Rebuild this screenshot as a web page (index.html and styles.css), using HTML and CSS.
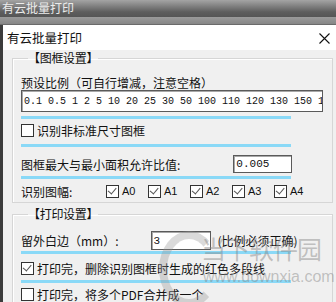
FILE: index.html
```html
<!DOCTYPE html>
<html lang="zh-CN">
<head>
<meta charset="UTF-8">
<title>有云批量打印</title>
<link rel="stylesheet" href="styles.css">
</head>
<body>
<div class="topbar">有云批量打印</div>
<div class="strip"></div>
<div class="window">
    <div class="win-title">
        <span>有云批量打印</span>
        <svg class="close" width="11" height="11" viewBox="0 0 11 11"><path d="M0.5 0.5L10.5 10.5M10.5 0.5L0.5 10.5" stroke="#111" stroke-width="1.1"/></svg>
    </div>
    <div class="body">
        <fieldset class="group g1">
            <legend>【图框设置】</legend>
            <div class="label first">预设比例（可自行增减，注意空格）</div>
            <div class="field wide">0.1 0.5 1 2 5 10 20 25 30 50 100 110 120 130 150 1</div>
            <div class="rule r1"></div>
            <div class="check-row c1"><span class="box"></span>识别非标准尺寸图框</div>
            <div class="rule r2"></div>
            <div class="row area">
                <span class="label-w">图框最大与最小面积允许比值:</span>
                <div class="field small">0.005</div>
            </div>
            <div class="rule r3"></div>
            <div class="row sizes">
                <span class="label-s">识别图幅:</span>
                <span class="size"><span class="box on"></span>A0</span>
                <span class="size"><span class="box on"></span>A1</span>
                <span class="size"><span class="box on"></span>A2</span>
                <span class="size"><span class="box on"></span>A3</span>
                <span class="size"><span class="box on"></span>A4</span>
            </div>
        </fieldset>
        <fieldset class="group g2">
            <legend>【打印设置】</legend>
            <div class="row margin">
                <span class="label-m">留外白边（mm）:</span>
                <div class="field tiny">3</div>
                <span class="note">(比例必须正确)</span>
            </div>
            <div class="rule r4"></div>
            <div class="check-row c2"><span class="box on"></span>打印完，删除识别图框时生成的红色多段线</div>
            <div class="rule r5"></div>
            <div class="check-row c3"><span class="box"></span>打印完，将多个PDF合并成一个</div>
        </fieldset>
        <div class="watermark">
            <span class="wm-logo"></span>
            <span class="wm-name">当下软件园</span>
            <span class="wm-url">www.downxia.com</span>
        </div>
    </div>
</div>
</body>
</html>
```

FILE: styles.css
```css
body {
    margin: 0;
    width: 336px;
    height: 302px;
    overflow: hidden;
    background-color: #3c3c3c;
    font-family: "Noto Sans CJK SC", "Liberation Sans", sans-serif;
    font-size: 12px;
    color: #111;
}
.topbar {
    height: 17px;
    line-height: 16px;
    padding-left: 2px;
    color: #ececec;
    background: linear-gradient(#a4a4a4, #5e5e5e 70%, #555);
}
.strip {
    height: 7px;
    background: linear-gradient(#9a9a9a, #868686);
    border-bottom: 1px solid #6a6a6a;
}
.window {
    margin-left: 3px;
    height: 277px;
    background-color: #f0f0f0;
    position: relative;
    overflow: hidden;
}
.win-title {
    height: 25px;
    background-color: #fff;
    display: flex;
    align-items: center;
    justify-content: space-between;
    padding: 0 6px 0 4px;
    font-size: 12.5px;
}
.close {
    margin-top: 1px;
}
.body {
    padding: 0 3px 0 9px;
}
.group {
    margin: 0;
    padding: 0 8px 3px 8px;
    border: 1px solid #d6d6d6;
    box-shadow: inset 1px 1px 0 #fff;
    min-width: 0;
}
.group legend {
    padding: 0;
    margin-left: 7px;
    line-height: 16px;
    letter-spacing: -0.3px;
}
.g2 {
    margin-top: 3px;
    border-bottom: none;
}
.label {
    line-height: 14px;
}
.first {
    padding-top: 10px;
}
.field {
    box-sizing: border-box;
    background-color: #fff;
    border: 1px solid #5a5a5a;
    box-shadow: inset 1px 1px 0 #a8a8a8;
    font-family: "Liberation Mono", monospace;
    font-size: 10px;
    padding-left: 2px;
    white-space: nowrap;
    overflow: hidden;
    display: flex;
    align-items: center;
}
.wide {
    width: 302px;
    height: 22px;
}
.small {
    width: 59px;
    height: 18px;
    margin-left: 53px;
    font-size: 11px;
}
.tiny {
    width: 60px;
    height: 19px;
    margin-left: 32px;
    font-size: 11px;
}
.rule {
    width: 270px;
    height: 3px;
    background-color: #8ad9f7;
}
.r1 { margin-top: 4px; }
.r2 { margin-top: 6px; }
.r3 { margin-top: 3px; }
.r4 { margin-top: 1px; }
.r5 { margin-top: 4px; }
.check-row {
    display: flex;
    align-items: center;
    height: 16px;
    gap: 3px;
}
.c1 { margin-top: 3px; }
.c2 { margin-top: 6px; }
.c3 { margin-top: 3px; }
.box {
    box-sizing: border-box;
    width: 13px;
    height: 13px;
    border: 1px solid #333;
    background-color: #fff;
    position: relative;
    flex-shrink: 0;
}
.box.on::after {
    content: "";
    position: absolute;
    left: 2px;
    top: 0px;
    width: 4px;
    height: 7px;
    border-right: 1.5px solid #555;
    border-bottom: 1.5px solid #555;
    transform: rotate(40deg);
    transform-origin: 60% 60%;
}
.row {
    display: flex;
    align-items: center;
}
.area {
    margin-top: 8px;
    height: 18px;
}
.sizes {
    margin-top: 4px;
    height: 16px;
}
.label-s {
    width: 85px;
}
.size {
    display: flex;
    align-items: center;
    gap: 3px;
    width: 42px;
    font-family: "Liberation Sans", sans-serif;
    font-size: 11px;
}
.margin {
    margin-top: 9px;
    height: 19px;
}
.note {
    margin-left: 7px;
}
.watermark {
    position: absolute;
    left: 152px;
    top: 198px;
    width: 180px;
    height: 80px;
    color: rgba(130, 130, 130, 0.45);
    pointer-events: none;
}
.wm-logo {
    position: absolute;
    left: 4px;
    top: 8px;
    width: 44px;
    height: 60px;
    border: 8px solid rgba(150, 150, 150, 0.35);
    border-right-color: transparent;
    border-radius: 50%;
}
.wm-name {
    position: absolute;
    left: 46px;
    top: 10px;
    font-size: 25px;
    letter-spacing: -1px;
    line-height: 30px;
}
.wm-url {
    position: absolute;
    left: 48px;
    top: 44px;
    font-family: "Liberation Sans", sans-serif;
    font-size: 16px;
    line-height: 20px;
}
```
